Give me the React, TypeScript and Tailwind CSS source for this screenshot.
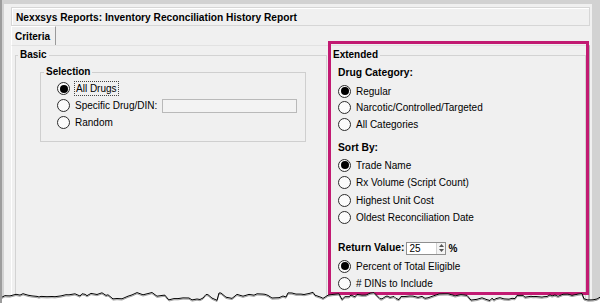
import React from "react";

const FONT = "font-['Liberation_Sans',Arial,sans-serif]";

function Radio({ checked }: { checked?: boolean }) {
  return (
    <span className="w-[13px] h-[13px] shrink-0 rounded-full border border-[#2b2b2b] bg-[#fbfbfb] flex items-center justify-center">
      {checked && <span className="w-[8px] h-[8px] rounded-full bg-black" />}
    </span>
  );
}

function RadioRow({
  label,
  checked,
  h,
  focus,
}: {
  label: string;
  checked?: boolean;
  h: string;
  focus?: boolean;
}) {
  return (
    <div className={`flex items-center ${h}`}>
      <Radio checked={checked} />
      {focus ? (
        <span className="ml-[4px] px-[1px] leading-[13px] border border-dotted border-[#444]">{label}</span>
      ) : (
        <span className="ml-[5px] leading-[13px]">{label}</span>
      )}
    </div>
  );
}

function TornEdge() {
  let s = 11;
  const rnd = () => {
    s = (s * 9301 + 49297) % 233280;
    return s / 233280;
  };
  const pts: [number, number][] = [];
  let x = 0;
  let base = 7;
  while (x <= 606) {
    if (rnd() < 0.3) base = 4.5 + rnd() * 6;
    const y = base + (rnd() - 0.5) * 3;
    pts.push([x, y]);
    x += 2 + Math.floor(rnd() * 5);
  }
  const line = pts.map((p, i) => `${i ? "L" : "M"}${p[0]},${p[1].toFixed(1)}`).join(" ");
  const fill = `${line} L606,20 L0,20 Z`;
  return (
    <svg className="absolute left-0 bottom-0" width="600" height="15" viewBox="0 -1 600 15">
      <path d={fill} fill="#ffffff" />
      <path d={line} fill="none" stroke="#a0a0a0" strokeWidth="1" transform="translate(0,1.2)" />
      <path d={line} fill="none" stroke="#000" strokeWidth="1" />
    </svg>
  );
}

export default function App() {
  return (
    <div
      className={`${FONT} relative w-[600px] h-[303px] overflow-hidden bg-[#d2d2d2] border-l-[2px] border-l-[#9c9c9c] pl-[2px] pt-[4px] pr-[8px] text-[10px] text-black`}
    >
      <div className="h-full bg-[#f0f0f0] flex flex-col">
        {/* Title bar */}
        <div className="ml-[7px] mt-[3px] w-[579px] h-[19px] border border-[#d6d6d6] shadow-[inset_1px_1px_0_#ffffff] flex items-center pl-[4px] pt-[2px] font-bold text-[10.2px]">
          Nexxsys Reports: Inventory Reconciliation History Report
        </div>
        {/* Tab row */}
        <div className="ml-[7px] h-[20px] flex items-end">
          <div className="w-[45px] h-[19px] border-l border-t border-l-white border-t-white border-r border-r-[#9a9a9a] flex items-center pl-[3px] pt-[1px] font-bold">
            Criteria
          </div>
        </div>
        {/* Panel */}
        <div className="ml-[7px] w-[579px] flex-1 border-l border-l-white border-t border-t-[#e2e2e2] border-r-[2px] border-r-[#b2b2b2] flex items-start">
          {/* Basic */}
          <fieldset className="ml-[3px] mt-[3px] w-[312px] h-[260px] border border-[#d3d3d3]">
            <legend className="ml-[2px] px-[2px] leading-[12px] font-bold">Basic</legend>
            <fieldset className="ml-[24px] mt-[5px] w-[266px] border border-[#cfcfcf] pb-[10px]">
              <legend className="ml-[3px] px-[2px] leading-[12px] font-bold">Selection</legend>
              <div className="pl-[16px] mt-[2px]">
                <RadioRow label="All Drugs" checked focus h="h-[17px]" />
                <div className="flex items-center h-[17px]">
                  <Radio />
                  <span className="ml-[5px] leading-[13px]">Specific Drug/DIN:</span>
                  <span className="ml-[5px] w-[135px] h-[14px] border border-[#b9b9b9] bg-[#f3f3f3]" />
                </div>
                <RadioRow label="Random" h="h-[17px]" />
              </div>
            </fieldset>
          </fieldset>
          {/* Extended */}
          <fieldset className="ml-[3px] mt-[3px] w-[256px] h-[260px] border border-[#d3d3d3]">
            <legend className="ml-0 px-[2px] leading-[12px] font-bold">Extended</legend>
            <div className="pl-[7px]">
              <div className="mt-[5px] h-[14px] flex items-center font-bold text-[10.3px]">Drug Category:</div>
              <div className="mt-[3px]">
                <RadioRow label="Regular" checked h="h-[16.5px]" />
                <RadioRow label="Narcotic/Controlled/Targeted" h="h-[16.5px]" />
                <RadioRow label="All Categories" h="h-[16.5px]" />
              </div>
              <div className="mt-[8.5px] h-[14px] flex items-center font-bold text-[10.3px]">Sort By:</div>
              <div className="mt-[1.5px]">
                <RadioRow label="Trade Name" checked h="h-[17.5px]" />
                <RadioRow label="Rx Volume (Script Count)" h="h-[17.5px]" />
                <RadioRow label="Highest Unit Cost" h="h-[17.5px]" />
                <RadioRow label="Oldest Reconciliation Date" h="h-[17.5px]" />
              </div>
              <div className="mt-[14.5px] h-[14px] flex items-center">
                <span className="font-bold text-[10.3px]">Return Value:</span>
                <span className="ml-[2px] w-[40px] h-[13px] border border-[#8f8f8f] bg-white flex items-center">
                  <span className="pl-[2px] flex-1 leading-[11px]">25</span>
                  <span className="w-[9px] h-full border-l border-l-[#d0d0d0] bg-[#f4f4f4] flex flex-col items-center justify-center gap-[2px]">
                    <svg width="5" height="3" viewBox="0 0 5 3">
                      <path d="M2.5 0 L5 3 L0 3 Z" fill="#555" />
                    </svg>
                    <svg width="5" height="3" viewBox="0 0 5 3">
                      <path d="M0 0 L5 0 L2.5 3 Z" fill="#555" />
                    </svg>
                  </span>
                </span>
                <span className="ml-[2px] font-bold">%</span>
              </div>
              <div className="mt-[2.5px]">
                <RadioRow label="Percent of Total Eligible" checked h="h-[17px]" />
                <RadioRow label="# DINs to Include" h="h-[17px]" />
              </div>
            </div>
          </fieldset>
        </div>
      </div>
      {/* Highlight annotation */}
      <div className="absolute left-[326px] top-[41px] w-[261px] h-[254px] border-[3px] border-[#c21a72]" />
      <TornEdge />
    </div>
  );
}
